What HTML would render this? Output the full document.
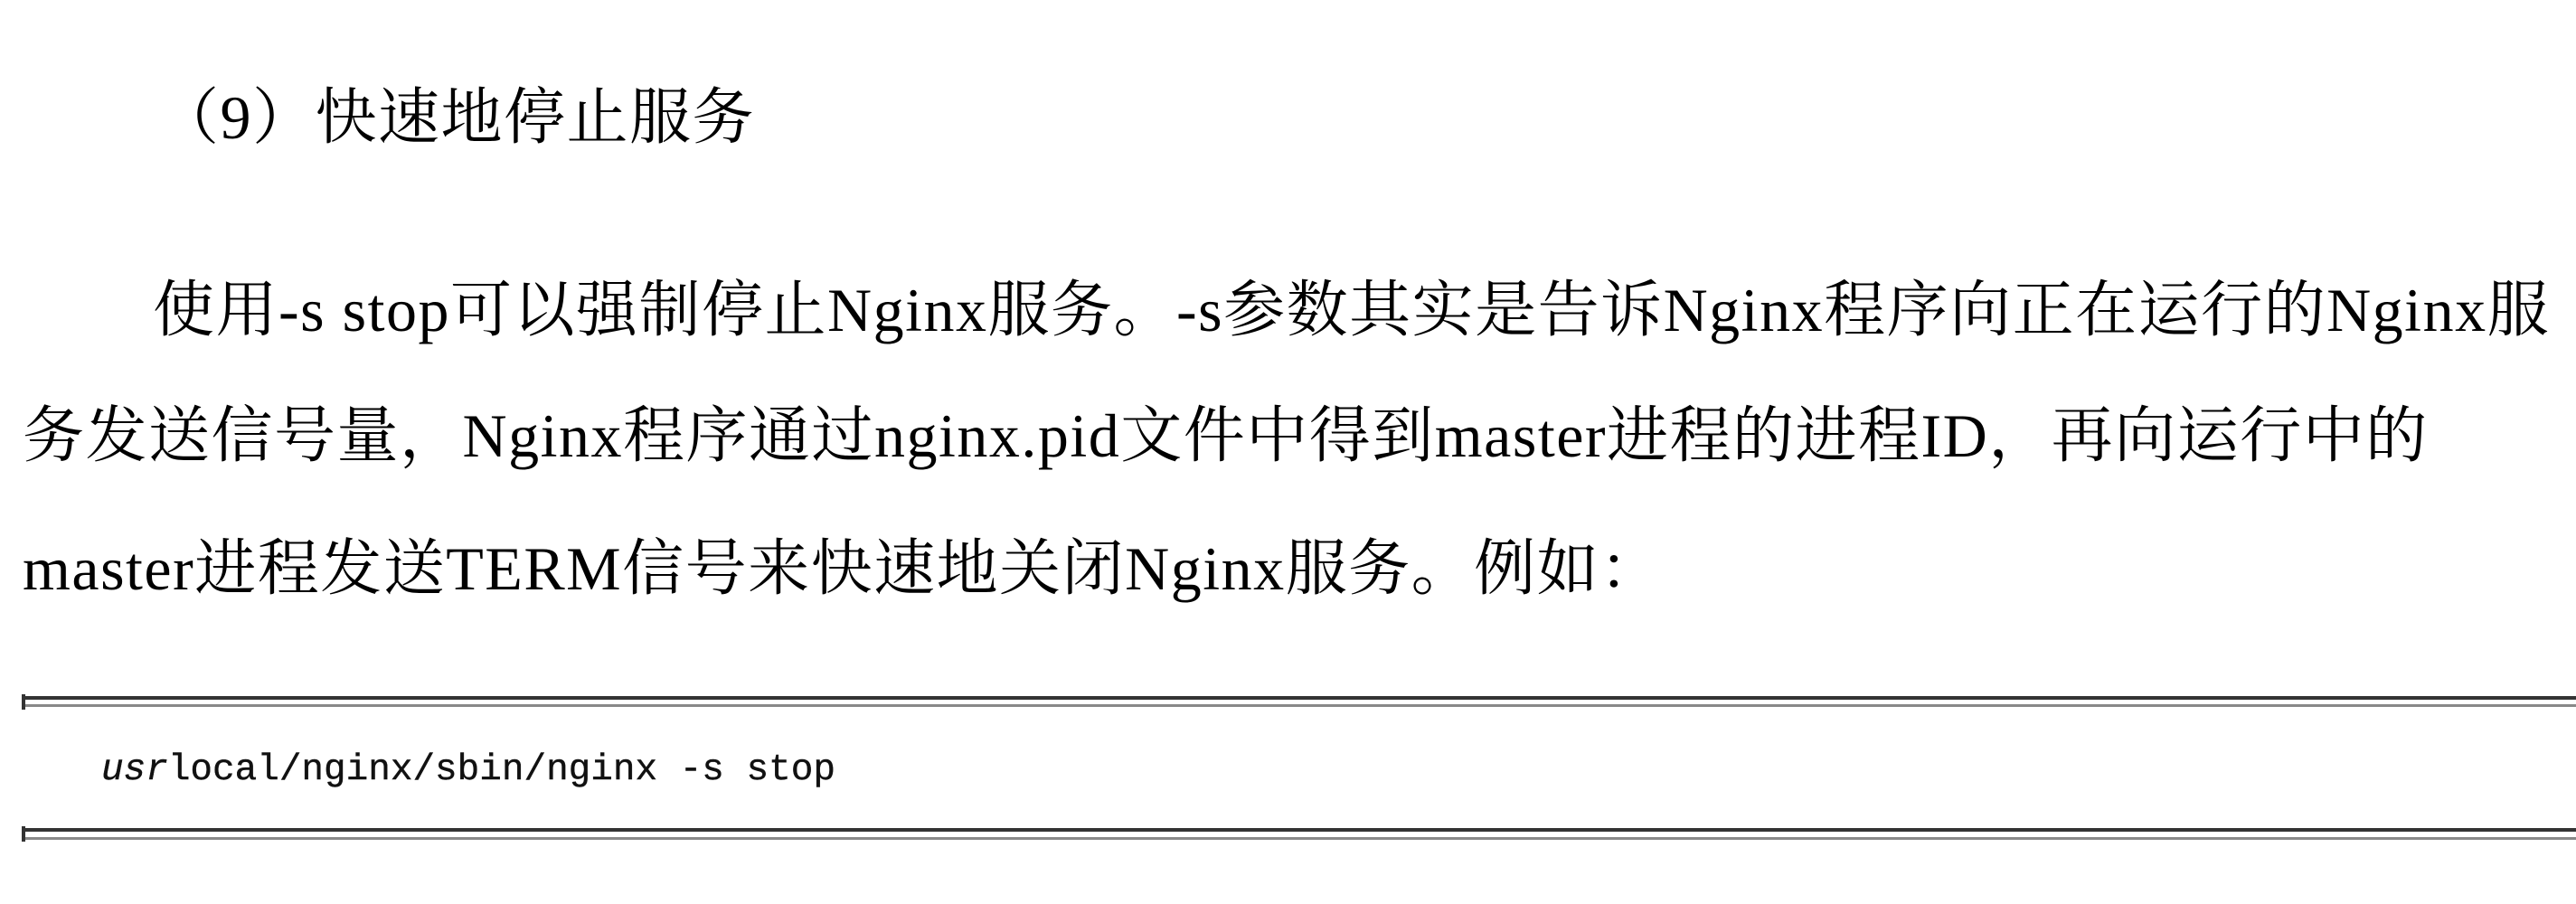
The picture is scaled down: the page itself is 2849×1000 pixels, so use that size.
<!DOCTYPE html>
<html><head><meta charset="utf-8"><style>
html,body{margin:0;padding:0;background:#fff;width:2849px;height:1000px;overflow:hidden;position:relative}
.t{position:absolute;white-space:nowrap;font-family:"Liberation Serif","Noto Serif CJK SC",serif;font-size:68px;line-height:68px;letter-spacing:1.5px;color:#000}
.r{position:absolute;left:25px;right:0}
.code{position:absolute;left:112px;top:830px;font-family:"Liberation Mono",monospace;font-size:41px;line-height:44px;color:#111;white-space:pre;-webkit-text-stroke:0.4px #111}
</style></head><body>
<div class="t" style="left:174px;top:96px">（9）快速地停止服务</div>
<div class="t" style="left:169px;top:309px">使用-s stop可以强制停止Nginx服务。-s参数其实是告诉Nginx程序向正在运行的Nginx服</div>
<div class="t" style="left:25px;top:448px">务发送信号量，Nginx程序通过nginx.pid文件中得到master进程的进程ID，再向运行中的</div>
<div class="t" style="left:25px;top:595px">master进程发送TERM信号来快速地关闭Nginx服务。例如：</div>
<div class="r" style="top:770px;height:4px;background:#333"></div>
<div class="r" style="top:779px;height:3px;background:#888"></div>
<div style="position:absolute;left:24px;top:768px;width:4px;height:17px;background:#333"></div>
<div class="code"><i>usr</i>local/nginx/sbin/nginx -s stop</div>
<div class="r" style="top:916px;height:4px;background:#333"></div>
<div class="r" style="top:926px;height:3px;background:#888"></div>
<div style="position:absolute;left:24px;top:914px;width:4px;height:17px;background:#333"></div>
</body></html>
